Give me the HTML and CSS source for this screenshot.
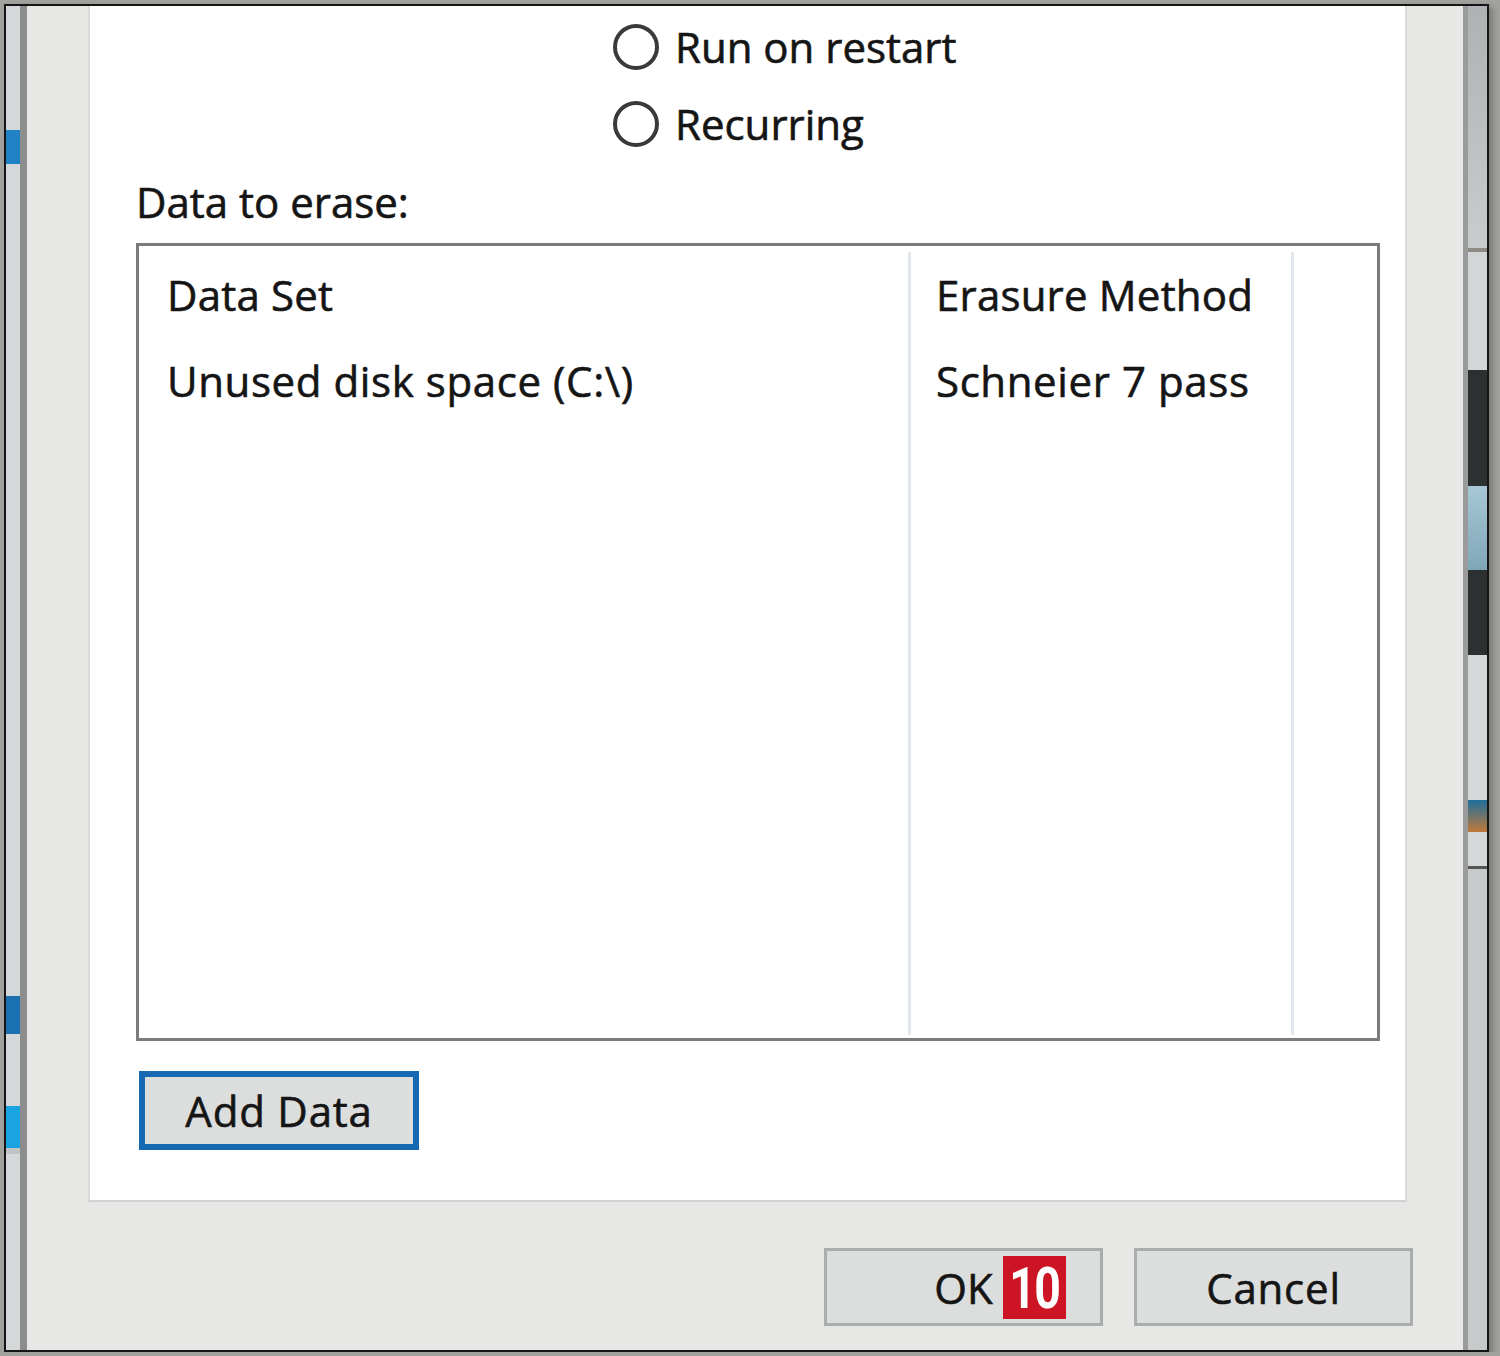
FILE: index.html
```html
<!DOCTYPE html>
<html lang="en">
<head>
    <meta charset="UTF-8">
    <title>Erase Schedule</title>
    <link rel="stylesheet" href="styles.css">
</head>
<body>
    <div class="screen">
        <div class="backdrop backdrop-left"></div>

        <div class="dialog">
            <div class="page">
                <label class="radio"><span class="radio-dot"></span>Run on restart</label>
                <label class="radio"><span class="radio-dot"></span>Recurring</label>

                <div class="section-label">Data to erase:</div>

                <div class="list">
                    <div class="list-col col-set">
                        <div class="cell">Data Set</div>
                        <div class="cell">Unused disk space (C:\)</div>
                    </div>
                    <div class="list-col col-method">
                        <div class="cell">Erasure Method</div>
                        <div class="cell">Schneier 7 pass</div>
                    </div>
                    <div class="list-col col-rest"></div>
                </div>

                <button class="btn btn-add">Add Data</button>
            </div>

            <div class="footer">
                <button class="btn btn-ok"><span class="ok-label">OK<span class="badge"><span>10</span></span></span></button>
                <button class="btn">Cancel</button>
            </div>
        </div>

        <div class="backdrop backdrop-right"></div>
    </div>
</body>
</html>
```

FILE: styles.css
```css
* {
    box-sizing: border-box;
}

body {
    margin: 0;
    background: #a2a29e;
    font-family: 'Open Sans', 'Noto Sans', sans-serif;
    color: #151515;
    overflow: hidden;
}

.screen {
    display: flex;
    width: 1485px;
    height: 1348px;
    margin: 4px 0 0 4px;
    border: 2px solid #151515;
    box-shadow: 4px 3px 6px rgba(0, 0, 0, 0.25);
    background: #d2d6d6;
}

/* bits of the window behind the dialog */
.backdrop-left {
    width: 14px;
    background: linear-gradient(to bottom,
        #d4d8d8 0, #d4d8d8 124px,
        #1f82c4 124px, #1f82c4 158px,
        #d4d8d8 158px, #d4d8d8 990px,
        #1b70b2 990px, #1b70b2 1028px,
        #d4d8d8 1028px, #d4d8d8 1100px,
        #1aa3e2 1100px, #1aa3e2 1142px,
        #c0c4c4 1142px, #c0c4c4 1148px,
        #d4d8d8 1148px);
}

.backdrop-right {
    width: 19px;
    background: linear-gradient(to bottom,
        #aeb2b2 0, #c8cccc 242px,
        #8c8c84 242px, #8c8c84 246px,
        #d2d6d6 246px, #d2d6d6 364px,
        #2c3030 364px, #2c3030 480px,
        #a8c8d6 480px, #7fa6b8 564px,
        #2c3030 564px, #2c3030 649px,
        #d4d8d8 649px, #d4d8d8 794px,
        #1e6e9a 794px, #c07a3a 826px,
        #d4d8d8 826px, #d4d8d8 860px,
        #555 860px, #555 863px,
        #c6caca 863px);
}

.dialog {
    display: flex;
    flex-direction: column;
    width: 1448px;
    background: #e7e7e6;
    border-left: 7px solid #8d8d8d;
    border-right: 5px solid #9b9b9b;
}

.page {
    display: flex;
    flex-direction: column;
    align-items: flex-start;
    margin: 0 56px 0 61px;
    padding: 2px 0 50px 46px;
    background: #fff;
    border-left: 2px solid #dadada;
    border-right: 2px solid #dadada;
    border-bottom: 2px solid #d2d2d2;
    font-size: 42px;
    -webkit-text-stroke: 0.6px currentColor;
}

.radio {
    display: flex;
    align-items: center;
    gap: 16px;
    height: 77px;
    margin-left: 477px;
}

.radio-dot {
    width: 46px;
    height: 46px;
    border: 4px solid #3a3a3a;
    border-radius: 50%;
}

.section-label {
    margin-top: 10px;
    line-height: 60px;
}

.list {
    display: flex;
    width: 1244px;
    height: 798px;
    margin-top: 11px;
    padding: 6px 0 3px;
    border: 3px solid #7b7b7b;
}

.list-col {
    border-right: 3px solid #e1e7ec;
}

.col-set {
    width: 772px;
}

.col-set .cell {
    padding-left: 28px;
}

.col-method {
    width: 383px;
}

.col-method .cell {
    padding-left: 25px;
}

.col-rest {
    flex: 1;
    border-right: none;
}

.cell {
    height: 86px;
    line-height: 86px;
    white-space: nowrap;
}

.cell:first-child {
    letter-spacing: 0.2px;
}

.cell + .cell {
    letter-spacing: 0.6px;
}

.btn {
    width: 279px;
    height: 78px;
    padding: 0;
    font-family: inherit;
    font-size: 42px;
    letter-spacing: 0.8px;
    color: #151515;
    background: #dcdddd;
    border: 3px solid #a9adad;
    -webkit-text-stroke: 0.6px currentColor;
    cursor: pointer;
}

.btn-add {
    width: 280px;
    height: 79px;
    margin: 30px 0 0 3px;
    border: 6px solid #1668b3;
}

.footer {
    display: flex;
    justify-content: flex-end;
    gap: 31px;
    padding: 46px 50px 24px 0;
}

.ok-label {
    position: relative;
    letter-spacing: 0;
}

.badge {
    position: absolute;
    left: calc(100% + 10px);
    top: 50%;
    width: 63px;
    height: 63px;
    margin-top: -31px;
    display: flex;
    align-items: center;
    justify-content: center;
    background: #cc1424;
    color: #fff;
    font-family: Roboto, 'Liberation Sans', sans-serif;
    font-weight: 700;
    font-size: 58px;
    line-height: 1;
    -webkit-text-stroke: 0;
}

.badge span {
    display: inline-block;
    transform: scaleX(0.8);
    letter-spacing: -2px;
}
```
